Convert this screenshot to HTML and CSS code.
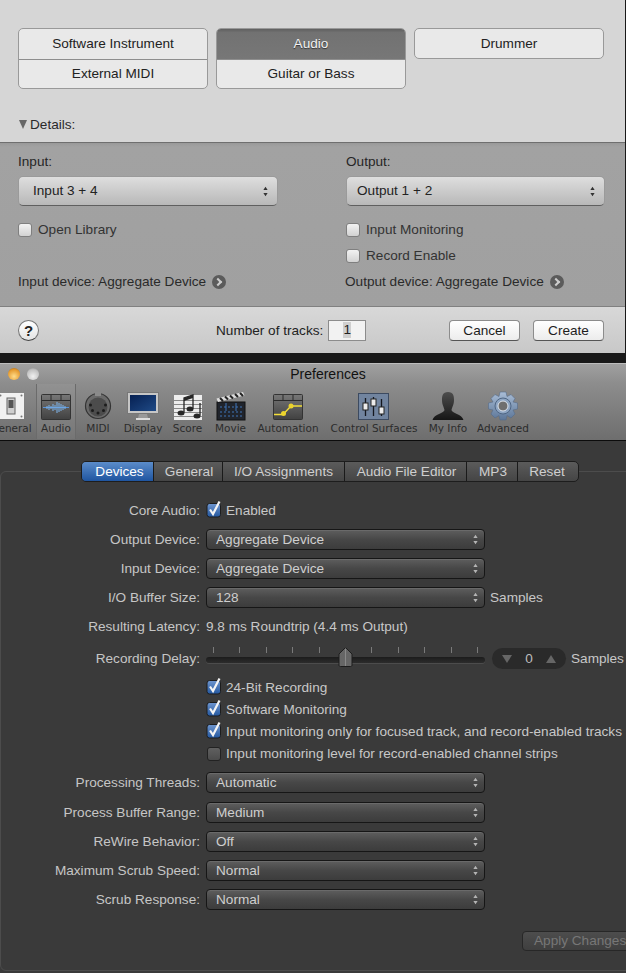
FILE: index.html
```html
<!DOCTYPE html>
<html lang="en">
<head>
<meta charset="utf-8">
<title>Logic Pro</title>
<link rel="stylesheet" href="styles.css">
</head>
<body>
<svg class="defs" width="0" height="0" aria-hidden="true">
  <defs>
    <symbol id="updown" viewBox="0 0 7 13"><path d="M3.500 0 L6.500 4.500 H0.500Z M0.500 8.500 H6.500 L3.500 13Z" fill="currentColor"/></symbol>
    <symbol id="checked" viewBox="0 0 16 18">
      <rect x="1" y="3.500" width="13.500" height="13.500" rx="2.500" fill="url(#gBlue)" stroke="#1d1d1d"/>
      <path d="M4 9.500 L7 14 L13.500 1.500" fill="none" stroke="#f4f4f4" stroke-width="2.200"/>
    </symbol>
    <linearGradient id="gBlue" x1="0" y1="0" x2="0" y2="1"><stop offset="0" stop-color="#6f96cf"/><stop offset="1" stop-color="#23579f"/></linearGradient>
    <linearGradient id="gPanel" x1="0" y1="0" x2="0" y2="1"><stop offset="0" stop-color="#777"/><stop offset="1" stop-color="#414141"/></linearGradient>
    <linearGradient id="gSteel" x1="0" y1="0" x2="0" y2="1"><stop offset="0" stop-color="#a9bdd6"/><stop offset="1" stop-color="#5c7698"/></linearGradient>
    <linearGradient id="gScreen" x1="0" y1="0" x2="1" y2="1"><stop offset="0" stop-color="#062052"/><stop offset="1" stop-color="#1f4a86"/></linearGradient>
    <linearGradient id="gPerson" x1="0" y1="0" x2="0" y2="1"><stop offset="0" stop-color="#4d4d4d"/><stop offset="1" stop-color="#161616"/></linearGradient>
  </defs>
</svg>

<section class="dialog">
  <div class="dialog-top">
    <div class="type-grid">
      <div class="type-card">
        <div class="type-btn">Software Instrument</div>
        <div class="type-btn">External MIDI</div>
      </div>
      <div class="type-card">
        <div class="type-btn is-active">Audio</div>
        <div class="type-btn">Guitar or Bass</div>
      </div>
      <div class="type-card is-single">
        <div class="type-btn">Drummer</div>
      </div>
    </div>
    <div class="disclosure"><span class="tri"></span>Details:</div>
  </div>

  <div class="details">
    <div class="details-col col-in">
      <div class="field-label">Input:</div>
      <div class="popup"><span>Input 3 + 4</span><svg class="popup-arrows"><use href="#updown"/></svg></div>
      <label class="light-check"><span class="box"></span>Open Library</label>
      <div class="device device-in">Input device: Aggregate Device<span class="go"></span></div>
    </div>
    <div class="details-col col-out">
      <div class="field-label">Output:</div>
      <div class="popup"><span>Output 1 + 2</span><svg class="popup-arrows"><use href="#updown"/></svg></div>
      <label class="light-check"><span class="box"></span>Input Monitoring</label>
      <label class="light-check second"><span class="box"></span>Record Enable</label>
      <div class="device device-out">Output device: Aggregate Device<span class="go"></span></div>
    </div>
  </div>

  <div class="dialog-foot">
    <div class="help">?</div>
    <div class="tracks"><span class="tracks-label">Number of tracks:</span><span class="tracks-input"><span class="tracks-val">1</span></span></div>
    <div class="foot-btn first">Cancel</div>
    <div class="foot-btn">Create</div>
  </div>
</section>

<section class="prefs">
  <header class="toolbar">
    <div class="titlebar">
      <span class="light light-orange"></span>
      <span class="light light-grey"></span>
      <span class="title">Preferences</span>
    </div>
    <nav class="tools">
      <div class="tool w-general">
        <svg width="28" height="30" viewBox="0 0 28 30"><rect x="1" y="2" width="26" height="26" fill="#f1f1f1"/><rect x="10" y="7" width="8" height="16" fill="#cfcfcf" stroke="#666"/><rect x="11.500" y="9" width="5" height="8" fill="#555"/><circle cx="3.500" cy="4.500" r="1" fill="#777"/><circle cx="24.500" cy="25.500" r="1" fill="#777"/><circle cx="24.500" cy="4.500" r="1" fill="#777"/></svg>
        <span>General</span>
      </div>
      <div class="tool w-audio is-current">
        <svg width="30" height="30" viewBox="0 0 30 30"><rect x="0.500" y="3.500" width="29" height="25" rx="1" fill="url(#gPanel)" stroke="#333"/><path d="M1 9.500H29M10 4V9M20 4V9" stroke="#2b2b2b"/><path d="M2 16.500H28" stroke="#5b95d8"/><path d="M6 15V18M8 14V19M10 15V18M12 13V20M14 14V19M16 11V22M18 12V21M20 13V20M22 14V19M24 15V18" stroke="#7fb6ee" stroke-width="1"/></svg>
        <span>Audio</span>
      </div>
      <div class="tool w-midi">
        <svg width="28" height="30" viewBox="0 0 28 30"><circle cx="14" cy="15" r="12.500" fill="#6a6a6a" stroke="#333" stroke-width="1.200"/><circle cx="14" cy="16" r="9.500" fill="#4c4c4c"/><rect x="11" y="1" width="6" height="4" fill="#8a8a8a"/><g fill="#1c1c1c"><circle cx="14" cy="22" r="1.500"/><circle cx="8.500" cy="19.500" r="1.500"/><circle cx="19.500" cy="19.500" r="1.500"/><circle cx="6.500" cy="14" r="1.500"/><circle cx="21.500" cy="14" r="1.500"/></g></svg>
        <span>MIDI</span>
      </div>
      <div class="tool w-display">
        <svg width="32" height="30" viewBox="0 0 32 30"><rect x="0.500" y="1.500" width="31" height="21" fill="#c6c6c6" stroke="#777"/><rect x="3" y="4" width="26" height="16" fill="url(#gScreen)"/><path d="M12 23H20L21 27H11Z" fill="#999"/><rect x="9" y="27" width="14" height="2" fill="#ddd"/></svg>
        <span>Display</span>
      </div>
      <div class="tool w-score">
        <svg width="30" height="30" viewBox="0 0 30 30"><rect x="1" y="4" width="28" height="25" fill="#ededed"/><path d="M1 9.500H29M1 13.500H29M1 17.500H29M1 21.500H29M1 25.500H29" stroke="#8a8a8a"/><g fill="#262626"><ellipse cx="8" cy="22" rx="3.500" ry="2.500"/><ellipse cx="17" cy="18" rx="3.500" ry="2.500"/><ellipse cx="24" cy="25" rx="3.500" ry="2.500"/></g><path d="M11 21.500V7L20 4V17.500M27 24.500V12" stroke="#262626" stroke-width="1.300" fill="none"/><path d="M11 7L20 4V7L11 10Z" fill="#262626"/></svg>
        <span>Score</span>
      </div>
      <div class="tool w-movie">
        <svg width="30" height="30" viewBox="0 0 30 30"><rect x="1" y="11" width="28" height="18" fill="#20242c" stroke="#111"/><path d="M0.500 7.500L27 1L28.500 4.500L2 11Z" fill="#ddd"/><path d="M4 7L7 10M9 5.500L12 8.500M14 4.500L17 7.500M19 3L22 6M24 2L27 5" stroke="#222" stroke-width="2"/><path d="M4 16H26M4 21H26M4 25H26" stroke="#3f74b8" stroke-dasharray="2 2"/><path d="M10 12V20M20 12V20" stroke="#3f74b8"/></svg>
        <span>Movie</span>
      </div>
      <div class="tool w-automation">
        <svg width="30" height="30" viewBox="0 0 30 30"><rect x="0.500" y="3.500" width="29" height="25" rx="1" fill="url(#gPanel)" stroke="#333"/><path d="M1 9.500H29M10 4V9M20 4V9" stroke="#2b2b2b"/><path d="M1 23.500H10L18 15H29" stroke="#f4df3a" fill="none" stroke-width="1.300"/><circle cx="10.500" cy="22.500" r="2.500" fill="#ecd42d"/><circle cx="18" cy="15" r="2.500" fill="#ecd42d"/></svg>
        <span>Automation</span>
      </div>
      <div class="tool w-control">
        <svg width="32" height="30" viewBox="0 0 32 30"><rect x="0.500" y="2.500" width="30" height="26" fill="#71849f" stroke="#3c4a60"/><path d="M7.500 7V25M15.500 6V25M23.500 8V25" stroke="#15181f" stroke-width="1.300"/><rect x="5" y="12" width="5" height="7" fill="#ececec" stroke="#222"/><rect x="13" y="8" width="5" height="7" fill="#ececec" stroke="#222"/><rect x="21" y="16" width="5" height="7" fill="#ececec" stroke="#222"/></svg>
        <span>Control Surfaces</span>
      </div>
      <div class="tool w-myinfo">
        <svg width="32" height="30" viewBox="0 0 32 30"><path d="M16 1C10.500 1 10 5 10 9C10 14 12 16 12.500 19C12.500 22 2 23 0.500 29H31.500C30 23 19.500 22 19.500 19C20 16 22 14 22 9C22 5 21.500 1 16 1Z" fill="url(#gPerson)"/></svg>
        <span>My Info</span>
      </div>
      <div class="tool w-advanced">
        <svg width="32" height="30" viewBox="0 0 32 30"><g fill="url(#gSteel)" stroke="#556c8a" stroke-width=".6"><path d="M13 1H19L20 5.500L24 3.500L28 7.500L26 11L30.500 12V18L26 19L28 23L24 27L20 24.500L19 29H13L12 24.500L8 27L4 23L6 19L1.500 18V12L6 11L4 7.500L8 3.500L12 5.500Z"/></g><circle cx="16" cy="15" r="8" fill="#8ea5c2" stroke="#4f6684"/><circle cx="16" cy="15" r="5" fill="#6f6f6f" stroke="#dfe6ef"/></svg>
        <span>Advanced</span>
      </div>
    </nav>
  </header>

  <div class="prefs-body">
    <div class="tabs">
      <div class="tab tab-devices is-selected">Devices</div>
      <div class="tab tab-general">General</div>
      <div class="tab tab-io">I/O Assignments</div>
      <div class="tab tab-file">Audio File Editor</div>
      <div class="tab tab-mp3">MP3</div>
      <div class="tab tab-reset">Reset</div>
    </div>
    <div class="panel">
      <div class="row"><div class="lbl">Core Audio:</div><div class="check"><svg class="ck"><use href="#checked"/></svg>Enabled</div></div>
      <div class="row"><div class="lbl">Output Device:</div><div class="dpop"><span>Aggregate Device</span><svg class="dpop-arrows"><use href="#updown"/></svg></div></div>
      <div class="row"><div class="lbl">Input Device:</div><div class="dpop"><span>Aggregate Device</span><svg class="dpop-arrows"><use href="#updown"/></svg></div></div>
      <div class="row"><div class="lbl">I/O Buffer Size:</div><div class="dpop"><span>128</span><svg class="dpop-arrows"><use href="#updown"/></svg></div><div class="unit">Samples</div></div>
      <div class="row"><div class="lbl">Resulting Latency:</div><div class="val">9.8 ms Roundtrip (4.4 ms Output)</div></div>
      <div class="row row-delay"><div class="lbl">Recording Delay:</div>
        <div class="slider">
          <div class="ticks"><i></i><i></i><i></i><i></i><i></i><i></i><i></i><i></i><i></i><i></i><i></i></div>
          <div class="track"></div>
          <svg class="thumb" width="15" height="20" viewBox="0 0 15 20"><path d="M7.500 .5L14 7V18C14 19 13.500 19.500 12.500 19.500H2.500C1.500 19.500 1 19 1 18V7Z" fill="#666" stroke="#1c1c1c"/><path d="M7.500 2V19" stroke="#888"/></svg>
        </div>
        <div class="stepper"><span class="dn"></span><span class="num">0</span><span class="up"></span></div>
        <div class="unit unit-delay">Samples</div>
      </div>
      <div class="row tight"><div class="check"><svg class="ck"><use href="#checked"/></svg>24-Bit Recording</div></div>
      <div class="row tight"><div class="check"><svg class="ck"><use href="#checked"/></svg>Software Monitoring</div></div>
      <div class="row tight"><div class="check"><svg class="ck"><use href="#checked"/></svg>Input monitoring only for focused track, and record-enabled tracks</div></div>
      <div class="row tight"><div class="check"><span class="ck-off"></span>Input monitoring level for record-enabled channel strips</div></div>
      <div class="row row-after-checks"><div class="lbl">Processing Threads:</div><div class="dpop"><span>Automatic</span><svg class="dpop-arrows"><use href="#updown"/></svg></div></div>
      <div class="row row-gap"><div class="lbl">Process Buffer Range:</div><div class="dpop"><span>Medium</span><svg class="dpop-arrows"><use href="#updown"/></svg></div></div>
      <div class="row"><div class="lbl">ReWire Behavior:</div><div class="dpop"><span>Off</span><svg class="dpop-arrows"><use href="#updown"/></svg></div></div>
      <div class="row"><div class="lbl">Maximum Scrub Speed:</div><div class="dpop"><span>Normal</span><svg class="dpop-arrows"><use href="#updown"/></svg></div></div>
      <div class="row"><div class="lbl">Scrub Response:</div><div class="dpop"><span>Normal</span><svg class="dpop-arrows"><use href="#updown"/></svg></div></div>
      <div class="apply-row"><div class="apply">Apply Changes</div></div>
    </div>
  </div>
</section>
</body>
</html>
```
FILE: styles.css
```css
* { box-sizing: border-box; }
html, body { margin: 0; height: 973px; overflow: hidden; }
body { width: 626px; background: #191919; font: 13.600px/16px "Liberation Sans", Arial, sans-serif; color: #222; }
.defs { position: absolute; }

/* ---------- new track dialog ---------- */
.dialog { width: 625px; height: 353px; display: flex; flex-direction: column; }
.dialog-top { height: 143px; background: #d6d6d6; padding: 28px 0 0 18px; border-bottom: 1px solid #6f6f6f; }
.type-grid { display: flex; gap: 8px; align-items: flex-start; }
.type-card { width: 190px; height: 61px; border: 1px solid #999; border-radius: 5px; overflow: hidden; background: #e9e9e9; }
.type-card.is-single { height: 31px; }
.type-btn { height: 30px; line-height: 29px; text-align: center; color: #222; }
.type-btn + .type-btn { border-top: 1px solid #8e8e8e; line-height: 27px; }
.type-btn.is-active { background: linear-gradient(#5f5f5f, #727272 12%, #777); color: #f2f2f2; text-shadow: 0 1px 1px #333; }
.disclosure { margin-top: 28px; display: flex; align-items: center; color: #2a2a2a; height: 16px; margin-left: 1px; }
.tri { width: 0; height: 0; border: 4.500px solid transparent; border-top: 9px solid #666; border-bottom: 0; margin-right: 3px; margin-top: -2px; }

.details { height: 164px; background: linear-gradient(#999 0, #a2a2a2 4px, #a0a0a0); border-bottom: 1px solid #808080; display: flex; padding-left: 18px; }
.details-col { display: flex; flex-direction: column; }
.col-in { width: 328px; }
.col-out { width: 259px; }
.field-label { margin-top: 11px; color: #262626; }
.popup { height: 30px; margin-top: 6px; border-radius: 5px; background: linear-gradient(#dedede, #b8b8b8); border: 1px solid #9a9a9a; border-bottom: 1px solid #5f5f5f; display: flex; align-items: center; justify-content: space-between; padding: 0 9px 0 14px; color: #222; }
.col-in .popup { width: 260px; }
.col-out .popup { padding-left: 10px; }
.popup-arrows { width: 5px; height: 11px; color: #333; }
.light-check { display: flex; align-items: center; gap: 6px; color: #333; height: 16px; margin-top: 16px; }
.light-check.second { margin-top: 10px; }
.box { width: 14px; height: 14px; border-radius: 3px; background: linear-gradient(#f2f2f2, #d2d2d2); border: 1px solid #7f7f7f; flex: none; }
.device { display: flex; align-items: center; color: #2a2a2a; height: 16px; margin-top: 36px; white-space: nowrap; }
.device-out { margin-top: 10px; margin-left: -1px; }
.go { position: relative; width: 14px; height: 14px; border-radius: 50%; background: #5b5b5b; margin-left: 6px; flex: none; }
.go::after { content: ""; position: absolute; left: 3px; top: 4px; width: 4px; height: 4px; border-top: 2px solid #ccc; border-right: 2px solid #ccc; transform: rotate(45deg); }

.dialog-foot { height: 46px; background: linear-gradient(#d8d8d8, #c8c8c8); display: flex; align-items: center; padding: 0 21px 0 18px; }
.help { width: 21px; height: 21px; border-radius: 50%; background: linear-gradient(#fff, #e4e4e4); border: 1px solid #777; border-bottom-color: #444; font-weight: bold; font-size: 15px; line-height: 19px; text-align: center; color: #222; flex: none; }
.tracks { display: flex; align-items: center; margin-left: 177px; color: #222; white-space: nowrap; }
.tracks-label { padding-top: 2px; }
.tracks-input { width: 38px; height: 21px; margin-left: 5px; border: 1px solid #8c8c8c; background: #f2f2f2; display: flex; align-items: center; justify-content: center; }
.tracks-val { background: #cfcfcf; width: 8px; text-align: center; }
.foot-btn { width: 71px; height: 21px; line-height: 19px; text-align: center; border-radius: 4px; background: linear-gradient(#fff, #ececec); border: 1px solid #8c8c8c; border-bottom-color: #555; color: #1d1d1d; margin-left: 13px; }
.foot-btn.first { margin-left: auto; }

/* ---------- preferences window ---------- */
.prefs { margin-top: 10px; height: 610px; display: flex; flex-direction: column; overflow: hidden; background: #3a3a3a; }
.toolbar { height: 78px; background: linear-gradient(#a0a0a0, #8d8d8d 25%, #6e6e6e); border-top: 1px solid #bdbdbd; border-bottom: 1px solid #0c0c0c; flex: none; }
.titlebar { height: 20px; display: flex; align-items: center; position: relative; padding-left: 8px; gap: 7px; }
.light { width: 12px; height: 12px; border-radius: 50%; }
.light-orange { background: radial-gradient(circle at 50% 70%, #ffdc8a, #e59a2e 65%, #8a5a1c); }
.light-grey { background: radial-gradient(circle at 50% 70%, #f0f0f0, #c2c2c2 65%, #828282); }
.title { position: absolute; left: 0; right: 0; padding-left: 30px; text-align: center; color: #111; font-size: 14px; }
.tools { display: flex; margin-left: -14px; height: 55px; }
.tool { flex: none; display: flex; flex-direction: column; align-items: center; justify-content: flex-end; padding-bottom: 4px; font: 10.500px/13px "DejaVu Sans", sans-serif; color: #2c2c2c; gap: 1px; white-space: nowrap; }
.tool.is-current { background: rgba(255,255,255,.05); border-left: 1px solid #6b6b6b; border-right: 1px solid #6b6b6b; }
.w-general { width: 50px; }
.w-audio { width: 40px; }
.w-midi { width: 44px; }
.w-display { width: 46px; }
.w-score { width: 43px; }
.w-movie { width: 43px; }
.w-automation { width: 72px; }
.w-control { width: 100px; }
.w-myinfo { width: 48px; }
.w-advanced { width: 62px; }

.prefs-body { flex: 1; padding-top: 20px; position: relative; }
.tabs { display: flex; width: 498px; height: 21px; margin-left: 81px; position: relative; z-index: 1; border-radius: 5px; background: linear-gradient(#5b5b5b, #454545); border: 1px solid #1d1d1d; }
.tab { line-height: 19px; text-align: center; color: #cfcfcf; border-right: 1px solid #1a1a1a; white-space: nowrap; }
.tab:first-child { border-radius: 4px 0 0 4px; }
.tab:last-child { border-right: 0; }
.tab.is-selected { background: linear-gradient(#5b8cca, #1f55a0); color: #fff; }
.tab-devices { width: 72px; padding-left: 4px; }
.tab-general { width: 69px; padding-left: 2px; }
.tab-io { width: 122px; }
.tab-file { width: 122px; padding-left: 2px; }
.tab-mp3 { width: 51px; padding-left: 2px; }
.tab-reset { width: 60px; padding-right: 2px; }

.panel { width: 680px; height: 500px; margin-top: -11px; border: 1px solid #4c4c4c; border-radius: 6px; padding-top: 24px; }
.row { height: 29px; display: flex; align-items: center; padding-left: 205px; position: relative; color: #c8c8c8; }
.row.tight { height: 22px; }
.row.row-after-checks { margin-top: 3px; }
.row.row-gap { margin-top: 1px; }
.lbl { position: absolute; left: 0; width: 199px; text-align: right; white-space: nowrap; color: #c6c6c6; }
.check { display: flex; align-items: center; white-space: nowrap; color: #c8c8c8; }
.ck { width: 16px; height: 18px; margin: -4px 4px 0 0; flex: none; }
.ck-off { width: 14px; height: 14px; border-radius: 3px; margin: 0 5px 0 1px; background: linear-gradient(#606060, #4c4c4c); border: 1px solid #222; flex: none; }
.dpop { width: 279px; height: 21px; border-radius: 4px; border: 1px solid #161616; background: linear-gradient(#5e5e5e, #474747 50%, #3c3c3c); display: flex; align-items: center; justify-content: space-between; padding: 0 6px 0 9px; color: #cfcfcf; box-shadow: inset 0 1px 0 #6a6a6a; }
.dpop-arrows { width: 5px; height: 11px; color: #b4b4b4; }
.unit { margin-left: 5px; }
.row-delay { margin-top: 3px; margin-bottom: 4px; }
.slider { width: 279px; height: 28px; position: relative; display: flex; flex-direction: column; margin-top: 1px; }
.ticks { display: flex; justify-content: space-between; padding: 2px 7px 0; height: 8px; }
.ticks i { width: 1px; height: 6px; background: #7a7a7a; }
.track { height: 6px; margin-top: 4px; border-radius: 3px; background: linear-gradient(#1c1c1c, #2c2c2c); box-shadow: 0 1px 0 #4c4c4c; }
.thumb { position: absolute; left: 132px; top: 2px; }
.stepper { width: 74px; height: 21px; margin-left: 7px; border-radius: 11px; background: #2a2a2a; display: flex; align-items: center; justify-content: space-between; padding: 0 10px; color: #bcbcbc; flex: none; }
.dn { width: 0; height: 0; border: 5px solid transparent; border-top: 8px solid #666; border-bottom: 0; }
.up { width: 0; height: 0; border: 5px solid transparent; border-bottom: 8px solid #666; border-top: 0; }
.unit-delay { margin-left: 5px; }
.apply-row { display: flex; padding-left: 521px; margin-top: 17px; }
.apply { width: 140px; height: 20px; line-height: 18px; padding-left: 11px; border-radius: 4px; border: 1px solid #272727; background: linear-gradient(#4d4d4d, #3f3f3f); color: #777; white-space: nowrap; }
```
